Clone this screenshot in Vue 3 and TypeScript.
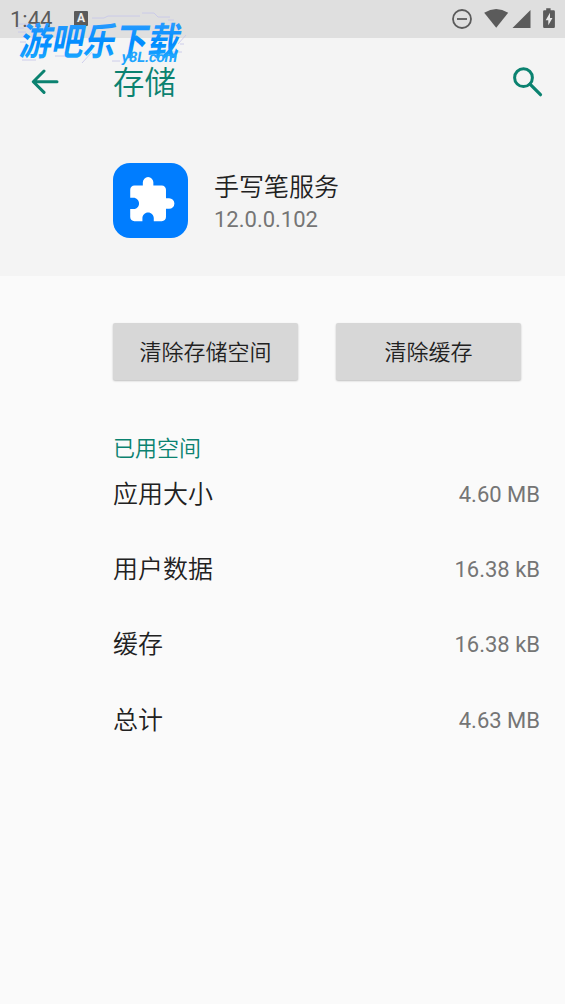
<script setup lang="ts">
interface UsageRow {
  label: string
  value: string
}

const actions: string[] = ['清除存储空间', '清除缓存']
const usage: UsageRow[] = [
  { label: '应用大小', value: '4.60 MB' },
  { label: '用户数据', value: '16.38 kB' },
  { label: '缓存', value: '16.38 kB' },
  { label: '总计', value: '4.63 MB' },
]
</script>

<template>
  <div class="screen">
    <header class="status">
      <span class="clock">1:44</span>
      <span class="badge">A</span>
      <svg class="status-icons" viewBox="0 0 110 38" width="110" height="38">
        <g fill="none" stroke="#5b5b5b" stroke-width="1.8">
          <circle cx="12" cy="19" r="9" />
          <path d="M7 19h10" />
        </g>
        <g fill="#5b5b5b">
          <path d="M34.2 12.700Q46.200 5.300 58.200 12.700L46.200 27.800z" />
          <path d="M80.500 10v18H62.500z" />
          <path d="M96.200 8.200h4.400v2h3.100q1.200 0 1.200 1.200v15.400q0 1.200-1.200 1.200h-9.400q-1.200 0-1.200-1.200V11.400q0-1.200 1.200-1.200h1.900z" />
        </g>
        <path d="M100 12.800l-4.300 7.400h2.600v5l4.200-7.200h-2.500z" fill="#e8e8e8" />
      </svg>
    </header>

    <section class="top">
      <nav class="bar">
        <svg class="back" viewBox="0 0 28 26" width="28" height="26">
          <path d="M26 12.700H3M13 2L2.300 12.700 13 23.400" fill="none" stroke="#0b8270" stroke-width="3" stroke-linecap="round" stroke-linejoin="round" />
        </svg>
        <h1>存储</h1>
        <svg class="search" viewBox="0 0 30 30" width="30" height="30">
          <circle cx="10.500" cy="10.700" r="8.900" fill="none" stroke="#0b8270" stroke-width="3" />
          <path d="M17 17.200l10.500 10.500" fill="none" stroke="#0b8270" stroke-width="3.200" stroke-linecap="round" />
        </svg>
      </nav>
      <div class="app">
        <div class="app-icon">
          <svg viewBox="0 0 24 24" width="50.500" height="50.500">
            <path
              fill="#fff"
              d="M20.500 11H19V7c0-1.100-.9-2-2-2h-4V3.500a2.500 2.500 0 0 0-5 0V5H4c-1.100 0-1.990.9-1.990 2v3.800H3.500c1.490 0 2.700 1.210 2.700 2.700s-1.210 2.700-2.700 2.700H2V20c0 1.100.9 2 2 2h3.800v-1.500c0-1.490 1.210-2.700 2.700-2.700s2.700 1.210 2.700 2.700V22H17c1.100 0 2-.9 2-2v-4h1.500a2.500 2.500 0 0 0 0-5z"
            />
          </svg>
        </div>
        <div class="app-text">
          <div class="name">手写笔服务</div>
          <div class="version">12.0.0.102</div>
        </div>
      </div>
    </section>

    <div class="actions">
      <button v-for="label in actions" :key="label" type="button">{{ label }}</button>
    </div>

    <section class="usage">
      <h2>已用空间</h2>
      <div v-for="row in usage" :key="row.label" class="row">
        <span class="label">{{ row.label }}</span>
        <span class="value">{{ row.value }}</span>
      </div>
    </section>

    <svg class="watermark" viewBox="0 0 240 80" width="240" height="80">
      <defs>
        <linearGradient id="wm" x1="0" y1="0" x2="0" y2="1">
          <stop offset="0.2" stop-color="#2a9dff" />
          <stop offset="0.6" stop-color="#008cff" />
          <stop offset="1" stop-color="#28b4ff" />
        </linearGradient>
      </defs>
      <g stroke="#c4c4ea" stroke-width="0.8" fill="none">
        <path d="M92 18h12l4-2h32M142 13h12l4 4h12M18 24h10M16 28h8M18 32h8M20 42h6M22 60h14M55 56h18M82 63l10-11M112 61h8M168 20h6M178 44l8-9M180 44h4M172 52h10" />
      </g>
      <text class="wm-main" transform="translate(18.500 54.500) skewX(-11) scale(0.84 1)">游吧乐下载</text>
      <text class="wm-sub" transform="translate(121 61.500) skewX(-10)">y8L.com</text>
    </svg>
  </div>
</template>

<style>
body {
  margin: 0;
  background: #fafafa;
}
</style>

<style scoped>
.screen {
  position: relative;
  width: 565px;
  height: 1004px;
  overflow: hidden;
  background: #fafafa;
  color: #212121;
  font-family: Roboto, "Noto Sans CJK SC", sans-serif;
}
.status {
  display: flex;
  align-items: center;
  box-sizing: border-box;
  height: 38px;
  padding: 0 5px 0 10px;
  background: #dfdfdf;
}
.clock {
  width: 64px;
  padding-top: 1px;
  font-size: 22px;
  line-height: 37px;
  color: #5b5b5b;
}
.badge {
  width: 14px;
  height: 15px;
  margin-top: -1px;
  border-radius: 1px;
  background: #5b5b5b;
  color: #eee;
  font-size: 12px;
  font-weight: 700;
  line-height: 15px;
  text-align: center;
}
.status-icons {
  margin-left: auto;
}
.top {
  height: 238px;
  background: #f4f4f4;
}
.bar {
  display: flex;
  align-items: center;
  height: 88px;
  padding: 0 22px 0 31px;
}
h1 {
  margin: 0 0 0 54px;
  padding-top: 4px;
  font-size: 31.400px;
  font-weight: 350;
  line-height: 44px;
  color: #0b8270;
}
.search {
  margin-left: auto;
}
.app {
  display: flex;
  padding: 37px 0 0 113px;
}
.app-icon {
  display: flex;
  align-items: center;
  justify-content: center;
  box-sizing: border-box;
  width: 75px;
  height: 75px;
  padding-left: 2px;
  border-radius: 17px;
  background: #007dff;
}
.app-text {
  padding: 7px 0 0 26px;
}
.name {
  font-size: 25px;
  font-weight: 350;
  line-height: 36px;
}
.version {
  font-size: 22px;
  line-height: 28px;
  color: #757575;
}
.actions {
  display: flex;
  gap: 38px;
  padding: 47px 0 0 113px;
}
button {
  width: 185px;
  height: 57px;
  padding: 0 0 3px;
  border: 0;
  border-radius: 2px;
  background: #d7d7d7;
  box-shadow: 0 1px 2px rgba(0, 0, 0, 0.24);
  color: #212121;
  font: inherit;
  font-size: 22px;
  font-weight: 350;
}
.usage {
  padding: 53px 25px 0 113px;
}
h2 {
  margin: 0;
  font-size: 22px;
  font-weight: 350;
  line-height: 32px;
  color: #0b8270;
}
.row {
  display: flex;
  align-items: center;
  justify-content: space-between;
  height: 54px;
  margin-bottom: 21.400px;
}
.label {
  padding-bottom: 1px;
  font-size: 25px;
  font-weight: 350;
}
.value {
  padding-top: 4px;
  font-size: 22px;
  color: #757575;
}
.watermark {
  position: absolute;
  top: 0;
  left: 0;
}
.wm-main {
  font-family: "Noto Sans CJK SC", sans-serif;
  font-size: 38px;
  font-weight: 700;
  fill: url(#wm);
}
.wm-sub {
  font-family: Roboto, sans-serif;
  font-size: 14.500px;
  font-weight: 700;
  letter-spacing: -0.1px;
  fill: #20a5ff;
}
</style>
